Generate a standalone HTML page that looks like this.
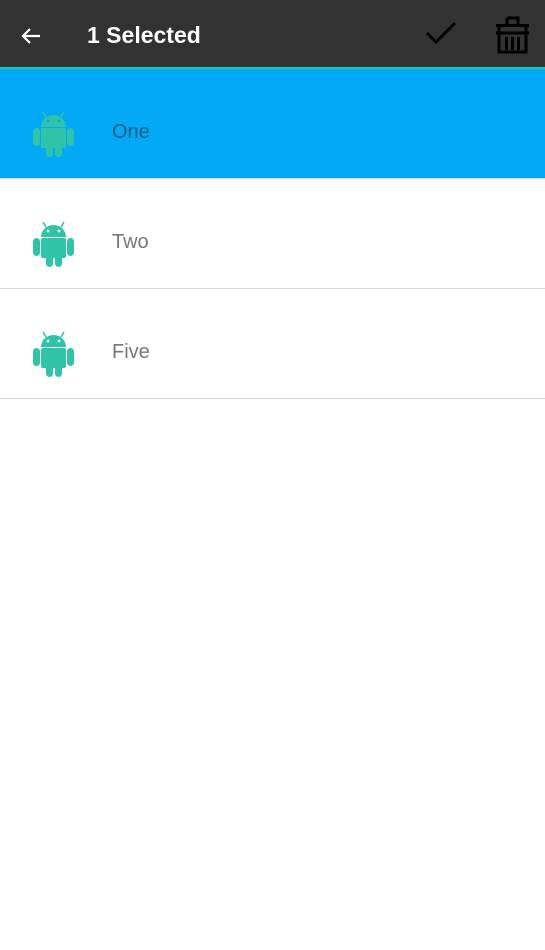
<!DOCTYPE html>
<html><head><style>
body{margin:0;width:545px;height:950px;background:#fff;font-family:"Liberation Sans",Roboto,sans-serif;position:relative;overflow:hidden}
.bar{position:absolute;top:0;left:0;width:545px;height:67px;background:#323232}
.line{position:absolute;top:67px;left:0;width:545px;height:2px;background:#1ec8a8}
.title{position:absolute;left:87px;top:22px;color:#fff;font-size:23px;font-weight:bold}
.row{position:absolute;left:0;width:545px;height:109px;border-bottom:1px solid #d8d8d8}
.row span{position:absolute;left:112px;top:52px;font-size:20px;color:#777}
.row svg{position:absolute;left:33px;top:42px}
</style></head><body>
<div class="bar"></div><div class="line"></div>
<svg style="position:absolute;left:19px;top:24px" width="24" height="24" viewBox="0 0 24 24"><path d="M21 12H4M11 5l-7 7 7 7" stroke="#fff" stroke-width="2.2" fill="none"/></svg>
<div class="title">1 Selected</div>
<svg style="position:absolute;left:425px;top:20px" width="32" height="28" viewBox="0 0 32 28"><path d="M2 13l9 9L30 3" stroke="#000" stroke-width="3" fill="none"/></svg>
<svg style="position:absolute;left:494px;top:16px" width="37" height="38" viewBox="0 0 37 38"><path d="M13 2h11v6M13 2v6M2 9.5h33M5 9.5V36h27V9.5M2 17h33M12.5 21v13M18.5 21v13M24.5 21v13" stroke="#000" stroke-width="3" fill="none"/></svg>
<div class="row" style="top:69px;height:109px;background:#03a9f4"><svg width="42" height="47" viewBox="0 0 42 47"><g fill="#2fc4a8"><path d="M8 16a12.5 12 0 0 1 25 0z"/><path d="M13 6l-3-5M28 6l3-5" stroke="#2fc4a8" stroke-width="1.6"/><rect x="8" y="17" width="25" height="20" rx="2"/><rect x="0" y="17" width="7" height="18" rx="3.5"/><rect x="34" y="17" width="7" height="18" rx="3.5"/><rect x="13" y="30" width="7" height="16" rx="3.5"/><rect x="22" y="30" width="7" height="16" rx="3.5"/></g><circle cx="15" cy="10" r="1.4" fill="#03a9f4"/><circle cx="26" cy="10" r="1.4" fill="#03a9f4"/></svg><span style="color:#1a5f86">One</span></div>
<div class="row" style="top:179px"><svg width="42" height="47" viewBox="0 0 42 47"><g fill="#2fc4a8"><path d="M8 16a12.5 12 0 0 1 25 0z"/><path d="M13 6l-3-5M28 6l3-5" stroke="#2fc4a8" stroke-width="1.6"/><rect x="8" y="17" width="25" height="20" rx="2"/><rect x="0" y="17" width="7" height="18" rx="3.5"/><rect x="34" y="17" width="7" height="18" rx="3.5"/><rect x="13" y="30" width="7" height="16" rx="3.5"/><rect x="22" y="30" width="7" height="16" rx="3.5"/></g><circle cx="15" cy="10" r="1.4" fill="#fff"/><circle cx="26" cy="10" r="1.4" fill="#fff"/></svg><span>Two</span></div>
<div class="row" style="top:289px"><svg width="42" height="47" viewBox="0 0 42 47"><g fill="#2fc4a8"><path d="M8 16a12.5 12 0 0 1 25 0z"/><path d="M13 6l-3-5M28 6l3-5" stroke="#2fc4a8" stroke-width="1.6"/><rect x="8" y="17" width="25" height="20" rx="2"/><rect x="0" y="17" width="7" height="18" rx="3.5"/><rect x="34" y="17" width="7" height="18" rx="3.5"/><rect x="13" y="30" width="7" height="16" rx="3.5"/><rect x="22" y="30" width="7" height="16" rx="3.5"/></g><circle cx="15" cy="10" r="1.4" fill="#fff"/><circle cx="26" cy="10" r="1.4" fill="#fff"/></svg><span>Five</span></div>
</body></html>
